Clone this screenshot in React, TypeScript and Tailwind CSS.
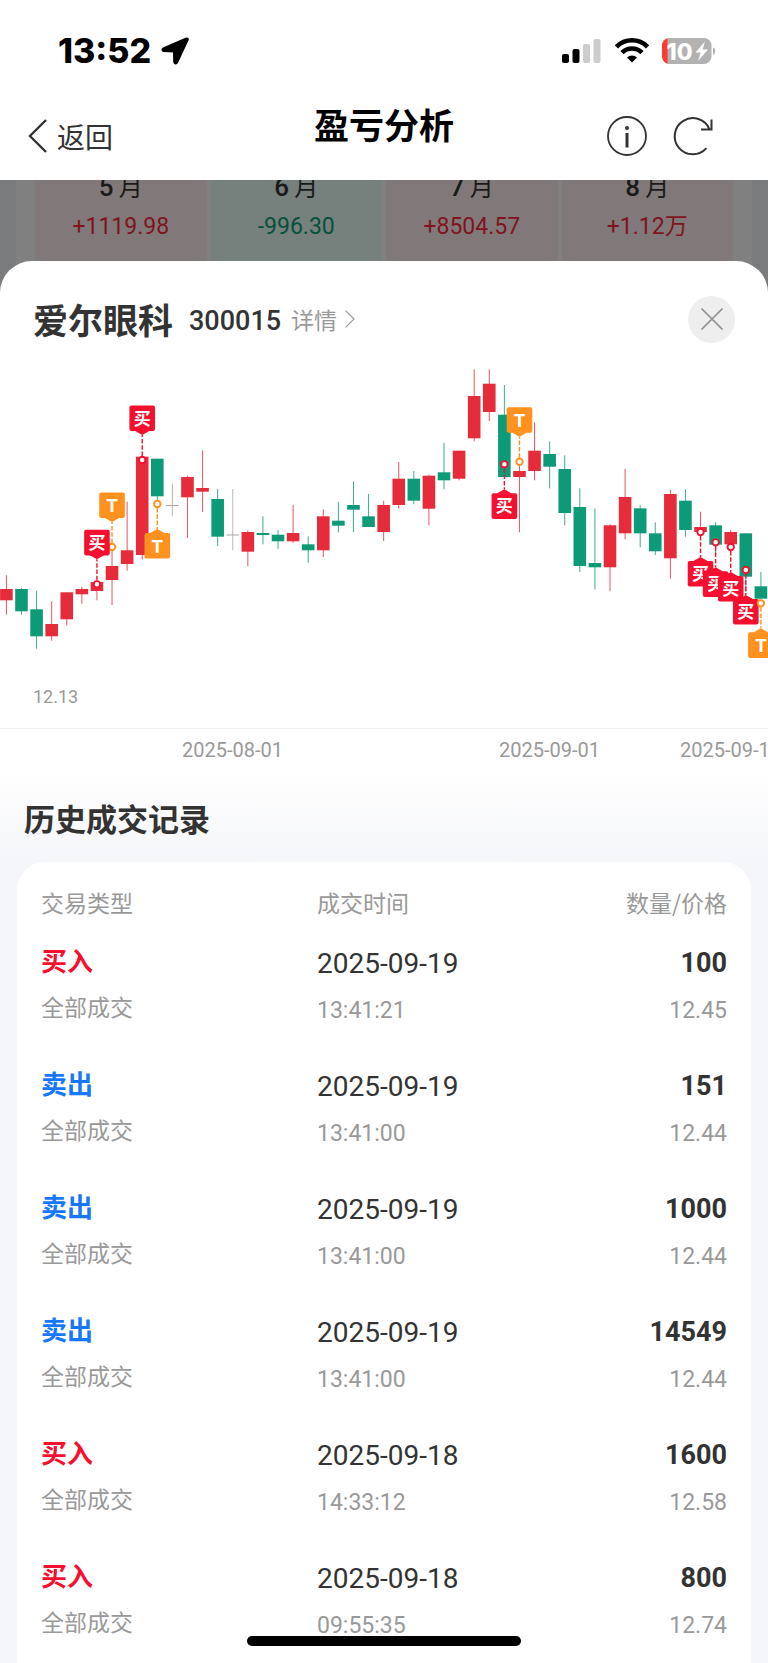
import React from "react";

type Tone = "up" | "down" | "flat";
type Candle = [Tone, number, number, number, number];

// tone, body top, body bottom, wick top, wick bottom
const candles: Candle[] = [
  ["up", 589, 600.3, 575.3, 614.7],
  ["down", 589, 611.3, 588, 614.7],
  ["down", 609.3, 636.3, 590.7, 648.7],
  ["up", 624, 636.3, 601.3, 640.7],
  ["up", 592.3, 619.3, 592.3, 625.3],
  ["up", 589, 594.3, 586.7, 603.7],
  ["up", 582, 591, 582, 600.3],
  ["up", 566, 580, 547, 605],
  ["up", 550.3, 564, 501.7, 570.7],
  ["up", 456.7, 555, 456.7, 559.7],
  ["down", 458.7, 496.3, 458.7, 500],
  ["flat", 505, 506, 483.3, 516.3],
  ["up", 477, 497.3, 475.7, 538],
  ["up", 488, 491.7, 450.3, 512],
  ["down", 499, 536.7, 489, 546],
  ["flat", 534.5, 535.5, 489, 550.3],
  ["up", 532, 551.7, 530.3, 566.3],
  ["down", 533, 535, 516.3, 544.3],
  ["down", 534.7, 541.3, 530, 549],
  ["up", 533, 541.3, 505, 542.7],
  ["down", 544.3, 550.3, 536.3, 562.7],
  ["up", 516.3, 550.3, 509.3, 557],
  ["down", 520.7, 525.7, 501.7, 532.3],
  ["down", 505, 509.7, 481.3, 532.3],
  ["down", 516.3, 527, 494, 527],
  ["up", 505, 532, 500.7, 541],
  ["up", 478.7, 505, 462, 508.7],
  ["down", 478.7, 500.7, 471, 504],
  ["up", 475.7, 508.7, 474.7, 525.3],
  ["down", 472.3, 480.3, 442.7, 489.3],
  ["up", 450.7, 478.7, 450.7, 480.3],
  ["up", 396, 438.3, 369.3, 441.3],
  ["up", 383.7, 412, 369.3, 421],
  ["down", 414.7, 477, 385, 477],
  ["up", 471, 477, 463, 532.3],
  ["up", 450.7, 471, 422.3, 480.3],
  ["down", 454, 466.7, 441.3, 488.3],
  ["down", 469, 513, 455.3, 525.3],
  ["down", 507, 566, 488.3, 572],
  ["down", 563, 567.3, 508.3, 589.3],
  ["up", 525.3, 567.3, 524.3, 591.3],
  ["up", 497, 533.3, 469, 539.3],
  ["down", 508.3, 533.3, 505, 547.3],
  ["down", 533.3, 551.3, 522.3, 555],
  ["up", 494, 558.3, 489.7, 578.7],
  ["down", 500.7, 530, 489.3, 536.7],
  ["up", 527, 532, 511.7, 532],
  ["down", 525.3, 544.7, 522.3, 556],
  ["up", 532, 544.3, 530, 544.3],
  ["down", 533.3, 576.7, 533.3, 592],
  ["down", 586.3, 598.7, 572, 598.7],
];

const toneColor: Record<Tone, string> = { up: "#e62b3a", down: "#0d9a77", flat: "#a8a8a8" };

const markers: { i: number; label: string; dot: number; above: boolean }[] = [
  { i: 7, label: "T", dot: 547, above: true },
  { i: 6, label: "买", dot: 584.3, above: true },
  { i: 9, label: "买", dot: 460, above: true },
  { i: 10, label: "T", dot: 504, above: false },
  { i: 33, label: "买", dot: 464.3, above: false },
  { i: 34, label: "T", dot: 461.7, above: true },
  { i: 46, label: "买", dot: 532, above: false },
  { i: 47, label: "买", dot: 542.3, above: false },
  { i: 48, label: "买", dot: 547, above: false },
  { i: 49, label: "买", dot: 570, above: false },
  { i: 50, label: "T", dot: 603.3, above: false },
];

const months = [
  { name: "5", value: "+1119.98", gain: true },
  { name: "6", value: "-996.30", gain: false },
  { name: "7", value: "+8504.57", gain: true },
  { name: "8", value: "+1.12万", gain: true },
];

const trades = [
  { buy: true, date: "2025-09-19", time: "13:41:21", qty: "100", price: "12.45" },
  { buy: false, date: "2025-09-19", time: "13:41:00", qty: "151", price: "12.44" },
  { buy: false, date: "2025-09-19", time: "13:41:00", qty: "1000", price: "12.44" },
  { buy: false, date: "2025-09-19", time: "13:41:00", qty: "14549", price: "12.44" },
  { buy: true, date: "2025-09-18", time: "14:33:12", qty: "1600", price: "12.58" },
  { buy: true, date: "2025-09-18", time: "09:55:35", qty: "800", price: "12.74" },
];

const cx = (i: number) => 6.4 + i * 15.09;

function Marker({ i, label, dot, above }: { i: number; label: string; dot: number; above: boolean }) {
  const x = cx(i);
  const color = label === "T" ? "#ff911e" : "#f5102f";
  const top = above ? dot - 54.5 : dot + 29;
  const tip = above ? dot - 25 : dot + 25;
  const base = above ? top + 25 : top + 0.5;
  return (
    <g>
      <line x1={x} x2={x} y1={above ? dot - 4 : dot + 4} y2={tip} stroke={color} strokeWidth="1.4" strokeDasharray="4.5 1.8" />
      <rect x={x - 12.8} y={top} width="25.6" height="25.6" rx="2" fill={color} />
      <polygon points={`${x - 8},${base} ${x + 8},${base} ${x},${tip}`} fill={color} />
      <circle cx={x} cy={dot} r="3.2" fill="#fff" stroke={color} strokeWidth="1.9" />
      <text
        x={x}
        y={label === "T" ? top + 19.5 : top + 19}
        textAnchor="middle"
        fill="#fff"
        className={label === "T" ? "font-['Inter',sans-serif] text-[18px] font-bold" : "text-[17px] font-bold"}
      >
        {label}
      </text>
    </g>
  );
}

function CandleChart() {
  return (
    <svg viewBox="0 343 768 426" className="block w-full" role="img" aria-label="爱尔眼科 K线">
      {candles.map(([tone, top, bottom, high, low], i) => (
        <g key={i} fill={toneColor[tone]}>
          <rect x={cx(i) - 0.5} y={high} width="1" height={low - high} opacity="0.8" />
          <rect x={cx(i) - 6.3} y={top} width="12.6" height={bottom - top} />
        </g>
      ))}
      {markers.map((m) => (
        <Marker key={m.i} {...m} />
      ))}
      <rect x="0" y="728" width="768" height="1" fill="#f0f0f0" />
      <g fill="#999" className="font-['Roboto',sans-serif] text-[20px]">
        <text x="33" y="703" className="text-[18px]">12.13</text>
        <text x="182" y="757">2025-08-01</text>
        <text x="499" y="757">2025-09-01</text>
        <text x="680" y="757">2025-09-19</text>
      </g>
    </svg>
  );
}

function StatusBar() {
  return (
    <div className="flex h-[102px] items-center justify-between pr-[51px] pl-[58px]">
      <div className="flex items-center gap-2.5">
        <span className="font-['Inter',sans-serif] text-[34px] leading-10 font-extrabold">13:52</span>
        <svg width="28" height="28" viewBox="0 0 28 28" aria-hidden="true">
          <path
            d="M25.6 1.8 2.4 11.6c-1 .5-.9 2 .3 2.1l10 .5c.4 0 .6.2.6.6l.2 10.2c.1 1.3 1.7 1.500 2.300.4L26.400 2.800c.3-.7-.2-1.200-.8-1z"
            fill="#000"
            stroke="#000"
            strokeWidth="2.600"
            strokeLinejoin="round"
          />
        </svg>
      </div>
      <svg width="156" height="28" viewBox="0 0 156 28" aria-hidden="true">
        <rect x="1" y="17" width="7" height="9" rx="2" />
        <rect x="11.5" y="12" width="7" height="14" rx="2" />
        <rect x="22" y="7" width="7" height="19" rx="2" fill="#ccc" />
        <rect x="32.5" y="2" width="7" height="24" rx="2" fill="#ccc" />
        <g fill="none" stroke="#000" strokeWidth="4.6">
          <path d="M55.400 9.800a22 22 0 0 1 31.200 0" />
          <path d="M61 15.600a14.200 14.200 0 0 1 20 0" />
        </g>
        <path d="M71 25.600l-5-5.200a7.200 7.200 0 0 1 10 0z" />
        <clipPath id="cell">
          <rect x="101" y="1" width="49.5" height="26" rx="7.5" />
        </clipPath>
        <g clipPath="url(#cell)">
          <rect x="101" y="1" width="50" height="26" fill="#b2b2b2" />
          <rect x="101" y="1" width="5.500" height="26" fill="#ff3a30" />
        </g>
        <path d="M152 10.500c3 .8 3 6.500 0 7.300z" fill="#b2b2b2" />
        <text x="105.500" y="22.500" fill="#fff" className="font-['Inter',sans-serif] text-[23px] font-extrabold">10</text>
        <path d="M144 4.500 134.500 15.500h5.200L137 24l10-11.500h-5.400z" fill="#fff" />
      </svg>
    </div>
  );
}

export default function App() {
  return (
    <div className="relative flex min-h-screen flex-col overflow-hidden bg-white font-['Noto_Sans_CJK_SC',sans-serif] text-[#333]">
      <header className="relative z-10 h-[180px] bg-white text-black">
        <StatusBar />
        <nav className="grid grid-cols-[1fr_auto_1fr] items-center">
          <button type="button" className="flex items-center gap-2.5 pl-[27px] text-[28px] leading-[68px] text-[#333]">
            <svg width="20" height="34" viewBox="0 0 20 34" fill="none" stroke="#333" strokeWidth="2.4" aria-hidden="true">
              <path d="M19 1 3 17l16 16" />
            </svg>
            返回
          </button>
          <h1 className="pb-6 text-[35px] leading-[44px] font-bold">盈亏分析</h1>
          <div className="flex items-center justify-end gap-6 pr-[54px]">
            <button type="button" aria-label="说明">
              <svg width="42" height="42" viewBox="0 0 42 42" fill="none" stroke="#333" aria-hidden="true">
                <circle cx="21" cy="21" r="19" strokeWidth="1.8" />
                <circle cx="21" cy="13" r="2" fill="#333" stroke="none" />
                <path d="M21 18v14.500" strokeWidth="3" />
              </svg>
            </button>
            <button type="button" aria-label="刷新">
              <svg width="42" height="42" viewBox="0 0 42 42" fill="none" stroke="#333" strokeWidth="2" aria-hidden="true">
                <path d="M34.400 33.200A18.100 18.100 0 1 1 37.500 14.300M39.500 4.500v10H29" />
              </svg>
            </button>
          </div>
        </nav>
      </header>

      <section className="-mt-5 bg-[#7a7b7d] px-4">
        <ul className="grid grid-cols-4 gap-1 bg-[#808080] px-[19px]">
          {months.map((m) => (
            <li
              key={m.name}
              className={`h-[134px] pt-1.5 text-center ${m.gain ? "bg-[#817979]" : "bg-[#76807c]"}`}
            >
              <p className="text-[24px] leading-10 text-[#1a1a1a]">
                <span className="font-['Roboto',sans-serif] text-[26px] font-medium">{m.name}</span> 月
              </p>
              <p
                className={`font-['Roboto','Noto_Sans_CJK_SC',sans-serif] text-[23px] leading-10 ${
                  m.gain ? "text-[#7f141e]" : "text-[#06513c]"
                }`}
              >
                {m.value}
              </p>
            </li>
          ))}
        </ul>
      </section>

      <main className="relative -mt-[33px] flex flex-1 flex-col rounded-t-[32px] bg-white">
        <div className="flex h-[82px] items-center justify-between pt-[34px] pr-[33px] pl-[33px]">
          <div className="flex items-center">
            <h2 className="text-[35px] leading-[48px] font-bold">爱尔眼科</h2>
            <span className="ml-4 pt-1 font-['Roboto',sans-serif] text-[27px] leading-[48px] font-medium">300015</span>
            <a href="#detail" className="ml-2.5 flex items-center gap-2 text-[23px] leading-[48px] text-[#999]">
              详情
              <svg width="10" height="18" viewBox="0 0 10 18" fill="none" stroke="#999" strokeWidth="1.200" aria-hidden="true">
                <path d="M.6.6 9 9 .6 17.400" />
              </svg>
            </a>
          </div>
          <button type="button" aria-label="关闭" className="flex size-[47px] items-center justify-center rounded-full bg-[#eee]">
            <svg width="22" height="22" viewBox="0 0 22 22" stroke="#949494" strokeWidth="1.600" aria-hidden="true">
              <path d="M.5.500l21 21M21.500.500l-21 21" />
            </svg>
          </button>
        </div>

        <CandleChart />

        <h2 className="bg-linear-to-b from-white to-[#f5f6f9] px-6 pt-7 pb-[23px] text-[31px] leading-[42px] font-bold">
          历史成交记录
        </h2>

        <div className="flex flex-1 flex-col bg-[#f5f6f9] px-[17px]">
          <div className="flex-1 rounded-t-[28px] bg-white px-6 pt-1.5">
            <table className="w-full text-left">
              <thead>
                <tr className="text-[23px] leading-[68px] text-[#999]">
                  <th className="w-[276px] p-0 font-normal">交易类型</th>
                  <th className="p-0 font-normal">成交时间</th>
                  <th className="p-0 text-right font-normal">数量/价格</th>
                </tr>
              </thead>
              <tbody>
                {trades.map((t, i) => (
                  <tr key={i} className="group align-top">
                    <td className="p-0 pb-[29px] group-last:pb-0">
                      <p className={`text-[26px] leading-[47px] font-bold ${t.buy ? "text-[#f5102f]" : "text-[#1677ff]"}`}>
                        {t.buy ? "买入" : "卖出"}
                      </p>
                      <p className="text-[23px] leading-[47px] text-[#999]">全部成交</p>
                    </td>
                    <td className="p-0 pt-1 font-['Roboto',sans-serif]">
                      <p className="text-[28px] leading-[47px]">{t.date}</p>
                      <p className="text-[23px] leading-[47px] text-[#999]">{t.time}</p>
                    </td>
                    <td className="p-0 pt-1 text-right font-['Roboto',sans-serif]">
                      <p className="text-[27px] leading-[47px] font-bold">{t.qty}</p>
                      <p className="text-[23px] leading-[47px] text-[#999]">{t.price}</p>
                    </td>
                  </tr>
                ))}
              </tbody>
            </table>
          </div>
        </div>
      </main>

      <div className="fixed bottom-[17px] left-1/2 h-2.5 w-[274px] -translate-x-1/2 rounded-full bg-black" />
    </div>
  );
}
